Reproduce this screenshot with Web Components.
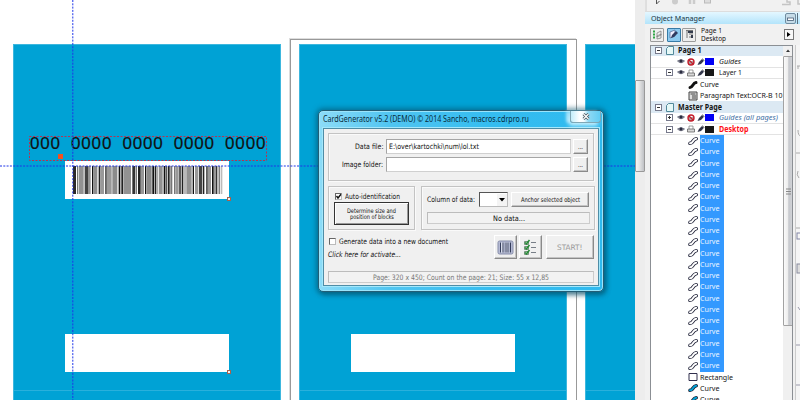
<!DOCTYPE html>
<html lang="en"><head><meta charset="utf-8"><title>CardGenerator</title>
<style>html,body{margin:0;width:800px;height:400px;overflow:hidden;background:#fff;font-family:"DejaVu Sans Condensed","DejaVu Sans",sans-serif}</style>
</head><body><design-app></design-app>
<script>
const define=(name,html,fill)=>customElements.define(name,class extends HTMLElement{
  connectedCallback(){
    if(this.shadowRoot)return;
    const t=document.createElement('template');t.innerHTML=html;
    this.attachShadow({mode:'open'}).appendChild(t.content.cloneNode(true));
    if(fill)fill(this,this.shadowRoot);
  }
});

/* One line of text fitted to the width in "w". */
define('fit-text','<style>:host{display:block;flex:none;line-height:0}svg{display:block;overflow:visible}text{font-family:var(--face,"DejaVu Sans Condensed","DejaVu Sans",sans-serif)}</style><svg><text></text></svg>',(el,r)=>{
  const w=+el.getAttribute('w'),s=+(el.getAttribute('size')||7.5),svg=r.querySelector('svg'),t=r.querySelector('text');
  svg.setAttribute('width',w);svg.setAttribute('height',11);
  t.textContent=el.getAttribute('value');
  t.setAttribute('y',8.2);t.setAttribute('textLength',w);t.setAttribute('lengthAdjust','spacingAndGlyphs');
  t.style.cssText=`font-size:${s}px;font-weight:${el.getAttribute('weight')||400};font-style:${el.hasAttribute('italic')?'italic':'normal'};fill:${el.getAttribute('color')||'#111'}`;
});

define('group-box','<style>:host{display:block;box-sizing:border-box;border:1px solid #c3c3c3;box-shadow:inset 1px 1px #fafafa,1px 1px #fafafa}</style><slot></slot>');
define('push-button','<style>:host{display:flex;flex-direction:column;align-items:center;justify-content:center;box-sizing:border-box;background:#f0f0f0;border:1px solid;border-color:#fff #8a8a8a #8a8a8a #fff;box-shadow:inset -1px -1px #c4c4c4}:host([default]){border:1.5px solid #333;box-shadow:inset 1px 1px #fff,inset -1px -1px #999}</style><slot></slot>');
define('text-field','<style>:host{display:flex;align-items:center;box-sizing:border-box;background:#fff;border:1px solid;border-color:#a5a5a5 #d0d0d0 #d0d0d0 #a5a5a5;padding-left:2px;height:15px}</style><slot></slot>');
define('status-field','<style>:host{display:flex;align-items:center;justify-content:center;box-sizing:border-box;height:12px;border:1px solid #bcbcbc;border-right-color:#ccc;border-bottom-color:#ccc;background:#f2f2f2}</style><slot></slot>');
define('check-box','<style>:host{display:block;box-sizing:border-box;width:7px;height:7px;background:#fff;border:1px solid;border-color:#666 #bbb #bbb #666}svg{display:none;overflow:visible}:host([checked]) svg{display:block}</style><svg width="5" height="5"><path d="M.5 2 2 4 5 .3" fill="none" stroke="#111" stroke-width="1.4"/></svg>');

define('generator-dialog',`<style>
:host{display:block;box-sizing:border-box;width:286px;height:182px;padding:0 4px 5px;border:1px solid #245d74;border-radius:5px;background:linear-gradient(90deg,#8ddcf8,#50c5f1 25%,#35bdf0 60%,#2fbaef);box-shadow:inset 0 0 0 1px #9be4fb,0 0 5px 2px #064c6588,2px 3px 5px #064c6577}
.bar{height:17px;display:flex;justify-content:space-between;padding-top:0}
.title{padding-top:3px;--face:"Noto Sans",sans-serif}
.close{display:flex;align-items:center;justify-content:center;box-sizing:border-box;width:31px;height:12px;margin-right:-2px;border:1px solid #7fa7b5;border-top:0;border-radius:0 0 3px 3px;background:linear-gradient(90deg,#c3eefb,#fff 30%,#f4fcfe 45%,#8fd9f3 60%,#62cdf3);box-shadow:-2px 4px 4px -1px #d9f6ffcc,-4px 0 3px #d9f6ffaa}
.client{box-sizing:border-box;height:158px;background:#f0f0f0;border:1px solid #4f8da6;box-shadow:0 0 0 1px #a4e8fc;padding:4px 4px 3px}
.files{height:48px;padding:5px 6px 0 0}
.row{display:grid;grid-template-columns:54px 185px 15px;column-gap:3px;align-items:center;margin-bottom:2.5px}
.row>fit-text{justify-self:end}.row push-button{height:15px;width:15px;margin-left:-1px}
.mid{display:grid;grid-template-columns:87px 174px;gap:6px;margin-top:5px}
.mid group-box{height:44px}
.auto{padding:4px 0 0 6px}.line{display:flex;align-items:center}
.auto .line{height:10px;gap:3px}.auto push-button{width:75px;height:23px;margin-left:-1px;margin-top:1px}
.auto push-button fit-text{height:7px;margin-top:-.5px}.auto push-button{padding-bottom:4px}
.data{padding:5px 5px 0}.data .line{height:15px}.select{display:flex;box-sizing:border-box;width:29px;height:15px;margin-left:4px;border:1px solid;border-color:#555 #bbb #bbb #555;background:#fff;justify-content:flex-end;align-items:center}
.arrow{width:10px;height:12px;display:flex;align-items:center;justify-content:center;background:#f4f4f4}
.data status-field{margin-top:5px;width:163px}
.bottom{display:flex;justify-content:space-between;margin-top:5px;height:36px}
.opts{padding-top:0}.opts .line{height:12px;gap:3px;margin-bottom:1px;padding-left:1px}
.acts{display:flex;gap:2px}.acts push-button{width:23px;height:24px}.acts .start{width:48px;margin-left:2px}
</style>
<div class="bar"><div class="title"><fit-text w="206" size="8.2" color="#062b3b" value="CardGenerator v5.2 (DEMO) © 2014 Sancho, macros.cdrpro.ru"></fit-text></div>
<div class="close"><svg width="8" height="7"><path d="M1.5 1 6.5 6M6.5 1 1.5 6" stroke="#46545a" stroke-width="2.8"/><path d="M1.5 1 6.5 6M6.5 1 1.5 6" stroke="#fff" stroke-width="1.2"/></svg></div></div>
<div class="client">
<group-box class="files">
<div class="row"><fit-text w="28.5" value="Data file:"></fit-text><text-field><fit-text w="90" value="E:\\over\\kartochki\\num\\lol.txt"></fit-text></text-field><push-button><fit-text w="5" size="7" value="..."></fit-text></push-button></div>
<div class="row"><fit-text w="41" value="Image folder:"></fit-text><text-field></text-field><push-button><fit-text w="5" size="7" value="..."></fit-text></push-button></div>
</group-box>
<div class="mid"><group-box class="auto"><div class="line"><check-box checked></check-box><fit-text w="55" value="Auto-identification"></fit-text></div><push-button default><fit-text w="49" size="6.3" value="Determine size and"></fit-text><fit-text w="44" size="6.3" value="position of blocks"></fit-text></push-button></group-box>
<group-box class="data"><div class="line"><fit-text w="48" value="Column of data:"></fit-text><div class="select"><div class="arrow"><svg width="6" height="4"><path d="M0 0h6L3 3.5z"/></svg></div></div><push-button style="width:78px;height:15px;margin-left:3px"><fit-text w="59" size="6.5" value="Anchor selected object"></fit-text></push-button></div><status-field><fit-text w="32" value="No data..."></fit-text></status-field></group-box></div>
<div class="bottom"><div class="opts"><div class="line"><check-box></check-box><fit-text w="109" value="Generate data into a new document"></fit-text></div><div class="line" style="padding:0"><fit-text w="73" italic value="Click here for activate..."></fit-text></div></div>
<div class="acts"><push-button><svg width="17" height="15"><rect x="1" y="1" width="15" height="13" rx="1.5" fill="#b5bad4" stroke="#858ca9"/><rect x="3" y="2.5" width="11" height="10" fill="#d9ddec"/><path d="M3.5 2.5v10M6 2.5v10M9 2.5v10M11 2.5v10M13.5 2.5v10" stroke="#343d5b"/><path d="M7.4 2.5v10M12.2 2.5v10" stroke="#7881a5" stroke-width=".6"/></svg></push-button>
<push-button><svg width="15" height="17" fill="none"><path d="M1.5 2.5h4v3h-4zM1.5 7.5h4v3h-4zM1.5 12.5h4v3h-4z" stroke="#79917f"/><path d="m2 3.5 1.5 1.3L6.5 1M2 8.5l1.5 1.3L6.5 6M2 13.5l1.5 1.3L6.5 11" stroke="#268b36" stroke-width="1.5"/><path d="M8 3.5h5M8 8.5h5M8 13.5h5" stroke="#777e87"/></svg></push-button>
<push-button class="start"><fit-text w="25.5" color="#999" value="START!"></fit-text></push-button></div></div>
<status-field><fit-text w="176" color="#777" value="Page: 320 x 450; Count on the page: 21; Size: 55 x 12,85"></fit-text></status-field>
</div>`);

/* Bars as "start width shade" in thirds of a pixel. */
define('bar-code','<style>:host{display:block;width:150px;height:28px}svg{display:block}</style><svg width="150" height="28" viewBox="0 0 450 28" preserveAspectRatio="none"></svg>',(el,r)=>{
 const bars=[[0,9,'#2b2826'],[12,4,'#777'],[18,14,'#929292'],[35,10,'#444'],[45,8,'#949494'],[57,4,'#111'],[61,12,'#8e8e8e'],[77,5,'#222'],[82,11,'#999'],[97,4,'#111'],[101,15,'#999'],[118,15,'#8c8c8c'],[137,5,'#111'],[145,6,'#222'],[153,21,'#929292'],[178,9,'#333'],[189,3,'#777'],[195,8,'#222'],[204,9,'#969696'],[216,4,'#111'],[221,15,'#898989'],[238,6,'#111'],[246,4,'#222'],[250,6,'#aaa'],[258,11,'#929292'],[272,5,'#111'],[278,5,'#555'],[285,5,'#222'],[292,6,'#777'],[304,3,'#333'],[308,9,'#999'],[319,4,'#111'],[326,5,'#222'],[334,4,'#999'],[340,16,'#929292'],[359,4,'#111'],[366,10,'#999'],[378,10,'#444'],[390,4,'#222'],[400,4,'#111'],[404,10,'#999'],[417,5,'#111'],[424,4,'#666'],[429,4,'#333'],[437,3,'#444'],[443,5,'#bbb']];
 r.querySelector('svg').innerHTML='<rect width="450" height="28" fill="#fff"/>'+bars.map(b=>`<rect x="${b[0]}" width="${b[1]}" height="28" fill="${b[2]}"/>`).join('');
});

define('drawing-canvas',`<style>
:host{display:block;position:relative;width:635px;height:400px;overflow:hidden;background:#fff}
div,bar-code,generator-dialog,svg{position:absolute}
.card{top:44px;width:268px;height:360px;background:#00a2d5;border:1px solid #3db7de;box-sizing:border-box}
.card i{position:absolute;top:345px;left:0;right:0;height:1px;background:#29b0dc}
.w{background:#fff;width:164px;height:38px}
.num{left:30px;top:134px;font:17px/20px "Liberation Sans",sans-serif;letter-spacing:.82px;word-spacing:4.7px;white-space:nowrap;color:#111;-webkit-text-stroke:.2px #111}
.page{left:290px;top:39px;width:285px;height:370px;border:1px solid #999;box-shadow:-1px -1px #ddd}
</style>
<div class="page"></div><div class="card" style="left:13px"><i></i></div><div class="card" style="left:299px"><i></i></div><div class="card" style="left:585px"><i></i></div>
<div class="w" style="left:65.4px;top:161px"></div><div class="w" style="left:65.4px;top:334px"></div><div class="w" style="left:351.4px;top:334px"></div>
<bar-code style="left:73px;top:166px"></bar-code><div class="num">000 0000 0000 0000 0000</div>
<svg width="635" height="400" fill="none"><rect x="29.5" y="136.5" width="237" height="24" stroke="#b83250" stroke-dasharray="2 1.5"/><path d="M72.8 0v400M0 166h635" stroke="#1f35e8" stroke-dasharray="2 1.3"/><rect x="58" y="154" width="5" height="5" fill="#f4511e"/><g fill="#eee" stroke="#a9624d"><rect x="227.5" y="197.5" width="3" height="3"/><rect x="227.5" y="370.5" width="3" height="3"/></g></svg>
<generator-dialog style="left:318px;top:110px"></generator-dialog>`);

const eye='<svg width="8" height="7"><path d="M.5 3Q4 0 7.5 3 4 6.5.5 3z" fill="#a9abb8" stroke="#555668" stroke-width=".7"/><circle cx="4" cy="3" r="1.6" fill="#292b3f"/></svg>';
const pen='<svg width="8" height="8"><path d="M.5 7 2 4l3-3 2 1.7-3 3.2z" fill="#33374c"/><path d="m5 .6 2.5 2" stroke="#777"/></svg>';
const ban='<svg width="8" height="8"><rect x="1" y="3" width="6" height="4" fill="#aaa"/><circle cx="4" cy="4" r="3" fill="none" stroke="#c51e2c" stroke-width="1.4"/><path d="m2 2 4 4" stroke="#c51e2c" stroke-width="1.2"/></svg>';
const printer='<svg width="8" height="8"><path d="M2 4V1h4v3" fill="#fff" stroke="#777" stroke-width=".7"/><path d="M.5 4h7v3h-7z" fill="#d8d8d8" stroke="#555" stroke-width=".7"/></svg>';
const curve=k=>'<svg width="10" height="10" fill="none" stroke-linecap="round">'+(k=='black'?'<path d="M2 7.5C5 7.5 4.5 3 8 2.6" stroke="#111" stroke-width="3"/>':`<path d="M2 7.3C5.2 7.6 4.6 3 8.2 2.7" stroke="#22243a" stroke-width="3.6"/><path d="M2 7.3C5.2 7.6 4.6 3 8.2 2.7" stroke="${k=='cyan'?'#00a2d5':'#fff'}" stroke-width="1.9"/>`)+'</svg>';
const plus=(c)=>`<svg width="7" height="7" fill="none"><rect x=".5" y=".5" width="6" height="6" fill="#fff" stroke="#777a8c"/><path d="M2 3.5h3${c?'M3.5 2v3':''}" stroke="#333"/></svg>`;
define('tree-row',`<style>
:host{display:flex;align-items:center;height:11.25px;box-sizing:border-box;flex:none}
:host([kind=page]){background:#dce9f3;padding-left:4px;gap:4px}
:host([kind=layer]){padding-left:15px;gap:2px;border-bottom:1px solid #e3e3e3}
:host([kind=object]){padding-left:37px;gap:2px}
svg{display:block;flex:none}.ex{width:7px;margin-right:2px}.sw{width:9px;height:7px;margin-left:-2px;margin-right:3px}
.sel{background:#3399ff;height:11.4px;width:23.5px}
</style><span style="display:contents"></span>`,(el,r)=>{
 const a=n=>el.getAttribute(n),k=a('kind'),s=r.querySelector('span');
 const text=`<fit-text w="${a('w')}" size="7.9" value="${a('label')}" ${a('weight')?'weight="700"':''} ${el.hasAttribute('italic')?'italic':''} color="${a('color')||'#151515'}"></fit-text>`;
 if(k=='page')s.innerHTML=plus(false)+'<svg width="8" height="9"><path d="M2.5.5h5v8h-7v-6z" fill="#e6f8f7" stroke="#51899a"/></svg>'+text;
 else if(k=='layer')s.innerHTML=`<div class="ex">${a('ex')?plus(a('ex')=='+'):''}</div>`+eye+(a('mode')=='ban'?ban:printer)+pen+`<div class="sw" style="background:${a('swatch')}"></div>`+text;
 else{
  const ic=a('icon');
  const icon=ic=='box'?'<svg width="10" height="10"><path d="M1 1.5h8v7H1z" fill="#fff" stroke="#302f4d"/></svg>':ic=='text'?'<svg width="10" height="10"><path d="M1 1h8v8H1z" fill="#ddd" stroke="#444"/><path d="M2.5 3h5M4 5h4M4 7h4" stroke="#444"/></svg>':curve(ic);
  s.innerHTML=icon+(el.hasAttribute('selected')?`<div class="sel">${text}</div>`:text);
 }
});

const row=(attrs)=>`<tree-row ${attrs}></tree-row>`;
define('object-tree',`<style>
:host{display:grid;grid-template-columns:132px 10px;box-sizing:border-box;width:144px;height:355px;border:1px solid #8b8f94;border-bottom:0;background:#fff;overflow:hidden}
.rows{display:flex;flex-direction:column;overflow:hidden;height:355px;margin-top:-.8px}
.scroll{background:#f0f0f0}.up{height:10px;display:flex;align-items:center;justify-content:center}
.thumb{height:270px;box-sizing:border-box;border:1px solid #a2a2a2;border-radius:1px;background:linear-gradient(90deg,#fafafa,#eee 45%,#c6c8cd 60%,#d1d3d7);display:flex;align-items:center;justify-content:center}
</style><div class="rows">${
row('kind="page" label="Page 1" w="23.5" weight="700"')+
row('kind="layer" mode="ban" swatch="#0000f5" label="Guides" w="22" italic')+
row('kind="layer" ex="-" mode="print" swatch="#171717" label="Layer 1" w="23"')+
row('kind="object" icon="black" label="Curve" w="19"')+
row('kind="object" icon="text" label="Paragraph Text:OCR-B 10" w="82.5"')+
row('kind="page" label="Master Page" w="44" weight="700"')+
row('kind="layer" ex="+" mode="ban" swatch="#0000f5" label="Guides (all pages)" w="59" italic color="#4470a5"')+
row('kind="layer" ex="-" mode="print" swatch="#171717" label="Desktop" w="29.5" weight="700" color="#ff1118"')+
Array(21).fill(row('kind="object" icon="outline" label="Curve" w="19.5" color="#e9f5ff" selected')).join('')+
row('kind="object" icon="box" label="Rectangle" w="33"')+
row('kind="object" icon="cyan" label="Curve" w="19.5"').repeat(2)
}</div><div class="scroll"><div class="up"><svg width="6" height="4"><path d="m1 3 2-2.5L5 3z" fill="#333"/></svg></div><div class="thumb"><svg width="5" height="7"><path d="M0 1h5M0 3.5h5M0 6h5" stroke="#888"/></svg></div></div>`);

define('object-manager',`<style>
:host{display:block;width:155px;height:400px;background:#f1f1f1;overflow:hidden;--face:"Noto Sans",sans-serif}
.top{height:12px;display:flex;box-sizing:border-box;border-bottom:1px solid #ddd}
.head{height:12px;display:flex;align-items:center;justify-content:space-between;padding-left:6px;background:linear-gradient(#e4f7ff,#b3e4fb)}
.wins{display:flex;gap:1px}.wins svg{display:block}
.tools{height:21px;display:flex;align-items:center;padding:0 6px 0 5px;box-sizing:border-box}
.b{box-sizing:border-box;width:14px;height:14px;border:1px solid #9b9b9b;border-radius:1px;background:#eee;display:flex;align-items:center;justify-content:center;margin-right:1.5px}
.b.on{background:#8dcaf0;border-color:#367ba7}
.labels{margin-left:3px;margin-top:-4px}.labels fit-text{height:8px}
.go{margin-left:auto;width:10px;height:11px;border:1px solid #777;background:#f8f8f8;display:flex;align-items:center;justify-content:center;box-sizing:border-box}
.body{display:flex;padding-left:5px;gap:2px}.side{width:4px;height:355px;border-left:1px solid #ccc;background:#f5f5f5}
</style>
<div class="top"><svg width="155" height="11" fill="none"><path d="M1 0v11" stroke="#ccc"/><path d="M11.5 0v4l3-3" stroke="#555"/><circle cx="30" cy="1.5" r="3" fill="#ccc"/><path d="M45 0v4M49 0v4" stroke="#ccc" stroke-width="2.5"/><rect x="59.5" y="-2" width="6" height="5" fill="#ddd" stroke="#bbb"/><path d="M137 4.5h8V2h-3V0M153 0v4h3" stroke="#c4c4c4" stroke-width="1.5"/></svg></div>
<div class="head"><fit-text w="54" size="7.9" color="#18343f" value="Object Manager"></fit-text><div class="wins"><svg width="11" height="11"><rect x=".5" y=".5" width="10" height="10" rx="1.5" fill="#c6dce8" stroke="#708da1"/><rect x="2.5" y="5" width="6" height="2.5" fill="#fff" stroke="#445b74" stroke-width=".8"/></svg><svg width="3" height="11"><path d="M.5 0v11" stroke="#5c7080"/></svg></div></div>
<div class="tools"><div class="b"><svg width="11" height="11" fill="none"><path d="M1 2.5h2M1 5.5h2M1 8.5h2" stroke="#2fa545" stroke-width="2"/><path d="M5 4l4-2v4L5 8zM5 7l4-2v4L5 10z" fill="#eee" stroke="#777" stroke-width=".7"/></svg></div><div class="b on" style="margin-left:1px"><svg width="11" height="11"><path d="M2 3 7 1v6L2 9z" fill="#eef" stroke="#5c719b" stroke-width=".8"/><path d="m3 9 1-3 4-4 2 2-4 4z" fill="#303b60"/></svg></div><div class="b"><svg width="11" height="11" fill="none"><path d="M2 1.5h7M3 1v8M5 5h4M5 8h4" stroke="#777"/><path d="M4 2h5v2H4zM7 6h2v3H7z" fill="#333b4d"/></svg></div>
<div class="labels"><fit-text w="21" size="7.5" value="Page 1"></fit-text><fit-text w="25" size="7.5" value="Desktop"></fit-text></div><div class="go"><svg width="4" height="5"><path d="M0 0l3.5 2.5L0 5z"/></svg></div></div>
<div class="body"><object-tree></object-tree><div class="side"><svg width="4" height="355" fill="none" stroke="#99a"><path d="M1 21h3M2 21v3M2 85q0 6 3 6M2 126q-2 4 1 7M0 108h4M0 183h4" stroke="#aaa"/><rect x="1" y="188" width="5" height="6" stroke="#8084a3"/><rect x="1" y="219" width="5" height="9" stroke="#888b9e" fill="#ddd"/><path d="M2 262l2 3M0 300h4M0 340h4"/></svg></div></div>`);

define('design-app',`<style>
:host{display:flex;width:800px;height:400px}
.rail{box-sizing:border-box;width:10px;height:400px;padding-top:80px;background:#ededed;flex:none}
.thumb{box-sizing:border-box;height:92px;border:1px solid #999;border-radius:1px;background:linear-gradient(90deg,#f5f5f5,#e6e6e6 40%,#bfc1c5)}
</style><drawing-canvas></drawing-canvas><div class="rail"><div class="thumb"></div></div><object-manager></object-manager>`);
</script></body></html>
